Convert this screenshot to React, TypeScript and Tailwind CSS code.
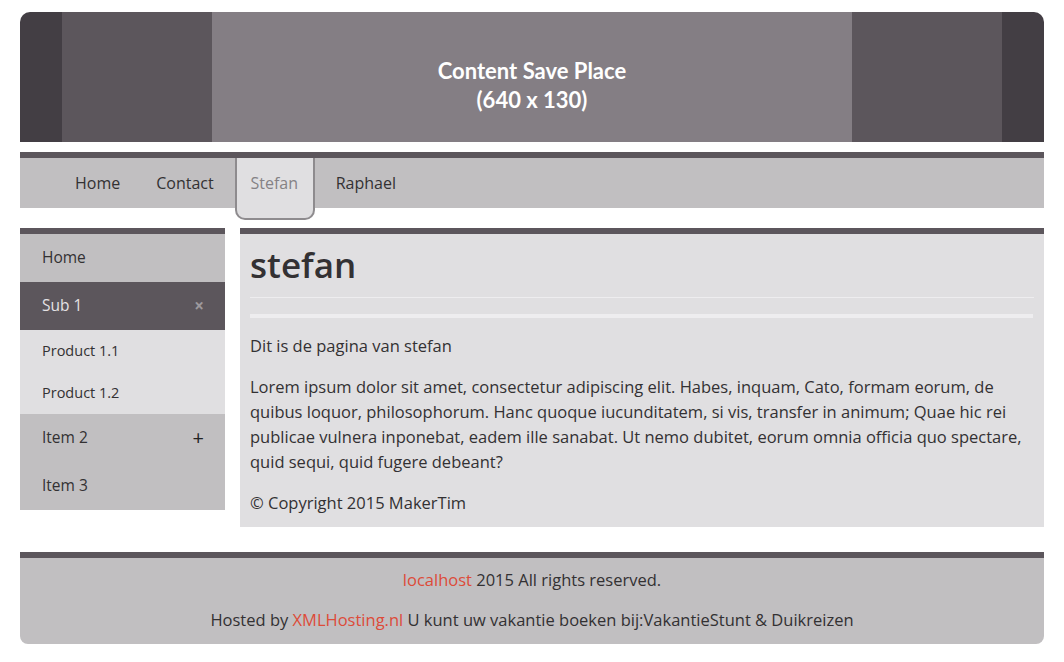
const sideItems = [
  { label: "Home", kind: "top" },
  { label: "Sub 1", kind: "open", sign: "×" },
  { label: "Product 1.1", kind: "sub" },
  { label: "Product 1.2", kind: "sub" },
  { label: "Item 2", kind: "top", sign: "+" },
  { label: "Item 3", kind: "top" },
];

export default function App() {
  return (
    <div
      className="min-h-[662px] bg-white px-5 pt-3 text-[#333133]"
      style={{ fontFamily: '"Open Sans", "Noto Sans", sans-serif' }}
    >
      {/* Banner */}
      <div className="flex h-[130px] overflow-hidden rounded-t-[10px]">
        <div className="w-[42px] bg-[#433e44]" />
        <div className="w-[150px] bg-[#5c565c]" />
        <div
          className="flex flex-1 flex-col items-center justify-center bg-[#847e84] pt-[16px] text-[22px] font-bold leading-[29px] text-white"
          style={{ fontFamily: 'Lato, "Open Sans", sans-serif' }}
        >
          <span>Content Save Place</span>
          <span>(640 x 130)</span>
        </div>
        <div className="w-[150px] bg-[#5c565c]" />
        <div className="w-[42px] bg-[#433e44]" />
      </div>

      {/* Top navigation */}
      <nav className="mt-[10px] h-[56px] border-t-[6px] border-[#5c565c] bg-[#c1bfc1]">
        <ul className="flex h-full items-start pl-[55px] text-[16px]">
          <li className="flex h-[50px] items-center">Home</li>
          <li className="ml-[36px] flex h-[50px] items-center">Contact</li>
          <li className="relative z-10 ml-[21px] h-[62px] w-[80px] rounded-b-[10px] border-2 border-t-0 border-[#8e8b8e] bg-[#e0dfe1] text-[#858285]">
            <span className="flex h-[50px] items-center justify-center pr-[1px]">Stefan</span>
          </li>
          <li className="ml-[21px] flex h-[50px] items-center">Raphael</li>
        </ul>
      </nav>

      {/* Main */}
      <div className="mt-5 flex items-start gap-[15px]">
        <aside className="w-[205px] border-t-[6px] border-[#5c565c]">
          {sideItems.map((it) => (
            <div
              key={it.label}
              className={
                it.kind === "open"
                  ? "flex h-[48px] items-center justify-between bg-[#5c565c] pl-[22px] pr-[21px] text-[15.5px] text-[#e4e2e4]"
                  : it.kind === "sub"
                  ? "flex h-[42px] items-center bg-[#e0dfe1] pl-[22px] text-[14.5px] text-[#333133]"
                  : "flex h-[48px] items-center justify-between bg-[#c1bfc1] pl-[22px] pr-[21px] text-[15.5px] text-[#333133]"
              }
            >
              <span>{it.label}</span>
              {it.sign && (
                <span
                  className={
                    it.kind === "open"
                      ? "text-[17px] font-bold text-[#9d999d]"
                      : "text-[20px] font-medium text-[#222]"
                  }
                >
                  {it.sign}
                </span>
              )}
            </div>
          ))}
        </aside>

        <main className="flex-1 border-t-[6px] border-[#5c565c] bg-[#e0dfe1] px-[10px] pb-[12px] text-[16.5px] leading-[25px]">
          <h1 className="pt-[10px] text-[35px] font-semibold leading-[42px] text-[#333133]">stefan</h1>
          <div className="mt-[11px] h-px bg-[#eeedef]" />
          <div className="mt-[16px] mr-[1px] h-[4px] bg-[#eeedef]" />
          <p className="mt-[15px]">Dit is de pagina van stefan</p>
          <p className="mt-[16px]">
            Lorem ipsum dolor sit amet, consectetur adipiscing elit. Habes, inquam, Cato, formam eorum, de
            quibus loquor, philosophorum. Hanc quoque iucunditatem, si vis, transfer in animum; Quae hic rei
            publicae vulnera inponebat, eadem ille sanabat. Ut nemo dubitet, eorum omnia officia quo spectare,
            quid sequi, quid fugere debeant?
          </p>
          <p className="mt-[16px]">© Copyright 2015 MakerTim</p>
        </main>
      </div>

      {/* Footer */}
      <footer className="mt-[25px] rounded-b-[8px] border-t-[6px] border-[#5c565c] bg-[#c1bfc1] pb-[13px] pt-[11px] text-center text-[16.5px] leading-[22px]">
        <p>
          <a className="text-[#dd4b39]">localhost</a> 2015 All rights reserved.
        </p>
        <p className="mt-[18px]">
          Hosted by <a className="text-[#dd4b39]">XMLHosting.nl</a> U kunt uw vakantie boeken bij:VakantieStunt &amp; Duikreizen
        </p>
      </footer>
    </div>
  );
}
